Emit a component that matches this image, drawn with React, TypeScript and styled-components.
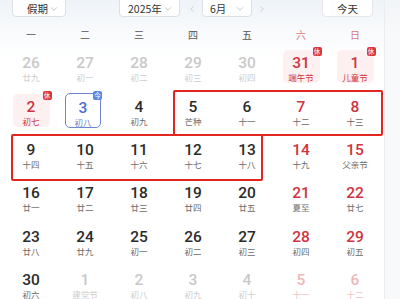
import React from 'react'
import styled, { createGlobalStyle, css } from 'styled-components'
import { ChevronDown, ChevronLeft, ChevronRight } from 'lucide-react'

const GlobalStyle = createGlobalStyle`
  html, body {
    margin: 0;
    padding: 0;
    background: #f7f8f9;
    font-family: Roboto, "Noto Sans CJK SC", sans-serif;
  }
`

type Kind = 'normal' | 'weekend' | 'faded' | 'fadedWeekend'

interface Day {
  n: number
  lunar: string
  kind?: Kind
  rest?: boolean
  today?: boolean
  festival?: boolean
}

const ROWS: Day[][] = [
  [
    { n: 26, lunar: '廿九', kind: 'faded' },
    { n: 27, lunar: '初一', kind: 'faded' },
    { n: 28, lunar: '初二', kind: 'faded' },
    { n: 29, lunar: '初三', kind: 'faded' },
    { n: 30, lunar: '初四', kind: 'faded' },
    { n: 31, lunar: '端午节', kind: 'weekend', rest: true, festival: true },
    { n: 1, lunar: '儿童节', kind: 'weekend', rest: true, festival: true },
  ],
  [
    { n: 2, lunar: '初七', kind: 'weekend', rest: true, festival: true },
    { n: 3, lunar: '初八', today: true },
    { n: 4, lunar: '初九' },
    { n: 5, lunar: '芒种' },
    { n: 6, lunar: '十一' },
    { n: 7, lunar: '十二', kind: 'weekend' },
    { n: 8, lunar: '十三', kind: 'weekend' },
  ],
  [
    { n: 9, lunar: '十四' },
    { n: 10, lunar: '十五' },
    { n: 11, lunar: '十六' },
    { n: 12, lunar: '十七' },
    { n: 13, lunar: '十八' },
    { n: 14, lunar: '十九', kind: 'weekend' },
    { n: 15, lunar: '父亲节', kind: 'weekend' },
  ],
  [
    { n: 16, lunar: '廿一' },
    { n: 17, lunar: '廿二' },
    { n: 18, lunar: '廿三' },
    { n: 19, lunar: '廿四' },
    { n: 20, lunar: '廿五' },
    { n: 21, lunar: '夏至', kind: 'weekend' },
    { n: 22, lunar: '廿七', kind: 'weekend' },
  ],
  [
    { n: 23, lunar: '廿八' },
    { n: 24, lunar: '廿九' },
    { n: 25, lunar: '初一' },
    { n: 26, lunar: '初二' },
    { n: 27, lunar: '初三' },
    { n: 28, lunar: '初四', kind: 'weekend' },
    { n: 29, lunar: '初五', kind: 'weekend' },
  ],
  [
    { n: 30, lunar: '初六' },
    { n: 1, lunar: '建党节', kind: 'faded' },
    { n: 2, lunar: '初八', kind: 'faded' },
    { n: 3, lunar: '初九', kind: 'faded' },
    { n: 4, lunar: '初十', kind: 'faded' },
    { n: 5, lunar: '十一', kind: 'fadedWeekend' },
    { n: 6, lunar: '十二', kind: 'fadedWeekend' },
  ],
]

const WEEK = ['一', '二', '三', '四', '五', '六', '日']

const numColor: Record<Kind, string> = {
  normal: '#2b2b2b',
  weekend: '#cf3440',
  faded: '#c9c9c9',
  fadedWeekend: '#f0b6ba',
}

const lunarColor: Record<Kind, string> = {
  normal: '#6a6a6a',
  weekend: '#6a6a6a',
  faded: '#cdcdcd',
  fadedWeekend: '#efc2c5',
}

const Page = styled.div`
  display: flex;
  width: 400px;
  height: 299px;
  overflow: hidden;
`

const Panel = styled.div`
  width: 384px;
  flex: none;
  background: linear-gradient(#eef3f8 0, #f8fafc 30px, #ffffff 60px);
  border-right: 1px solid #ececec;
`

const Toolbar = styled.div`
  display: flex;
  align-items: center;
  height: 23px;
  margin-top: -6px;
  padding: 0 11px 0 12px;
`

const Select = styled.div<{ $w: number; $ml?: number; $pl?: number }>`
  display: flex;
  align-items: center;
  justify-content: space-between;
  box-sizing: border-box;
  flex: none;
  width: ${(p) => p.$w}px;
  height: 22px;
  margin-left: ${(p) => p.$ml ?? 0}px;
  padding: 6px 6px 0 ${(p) => p.$pl ?? 7}px;
  background: #fff;
  border: 1px solid #dcdfe3;
  border-radius: 4px;
  font-size: 10.5px;
  white-space: nowrap;
  color: #333;
  font-family: "Noto Sans CJK SC", sans-serif;

  svg {
    flex: none;
  }
`

const Arrow = styled.div<{ $ml: number }>`
  display: flex;
  align-items: center;
  padding-top: 6px;
  margin-left: ${(p) => p.$ml}px;
  color: #b5b8bd;
`

const TodayButton = styled.div`
  display: flex;
  align-items: center;
  justify-content: center;
  box-sizing: border-box;
  width: 51px;
  height: 23px;
  margin-left: auto;
  padding-top: 6px;
  background: #fff;
  border: 1px solid #e4e6e9;
  border-radius: 4px;
  font-size: 10.5px;
  color: #333;
  font-family: "Noto Sans CJK SC", sans-serif;
`

const WeekRow = styled.div`
  display: grid;
  grid-template-columns: repeat(7, 54px);
  height: 22px;
  padding: 6px 2px 0 4px;
`

const WeekDay = styled.div<{ $weekend: boolean }>`
  display: flex;
  align-items: center;
  justify-content: center;
  font-size: 10px;
  font-family: "Noto Sans CJK SC", sans-serif;
  color: ${(p) => (p.$weekend ? '#d77a80' : '#555')};
`

const Grid = styled.div`
  display: grid;
  grid-template-columns: repeat(7, 54px);
  grid-template-rows: repeat(6, 43.4px);
  padding: 0 2px 0 4px;
`

const Slot = styled.div<{ $row: number; $col: number }>`
  grid-row: ${(p) => p.$row};
  grid-column: ${(p) => p.$col};
  display: flex;
  align-items: center;
  justify-content: center;
`

const Cell = styled.div<{ $rest?: boolean; $today?: boolean; $shift?: number }>`
  position: relative;
  box-sizing: border-box;
  width: 37px;
  height: 33px;
  padding-top: 4px;
  margin-left: ${(p) => p.$shift ?? 0}px;
  display: flex;
  flex-direction: column;
  align-items: center;
  border-radius: 5px;
  ${(p) =>
    p.$rest &&
    css`
      background: #fdf0f0;
    `}
  ${(p) =>
    p.$today &&
    css`
      width: 36px;
      height: 35px;
      padding-top: 5px;
      border: 1px solid #6f86d3;
      background: #fff;
    `}
`

const Num = styled.div<{ $color: string }>`
  font-family: Roboto, sans-serif;
  font-size: 15.5px;
  font-weight: 500;
  line-height: 18px;
  color: ${(p) => p.$color};
`

const Lunar = styled.div<{ $color: string }>`
  font-family: "Noto Sans CJK SC", sans-serif;
  font-size: 8.5px;
  line-height: 11px;
  white-space: nowrap;
  color: ${(p) => p.$color};
`

const Badge = styled.div<{ $blue?: boolean }>`
  position: absolute;
  top: -3px;
  right: -2px;
  width: 9px;
  height: 9px;
  border-radius: 2px;
  display: flex;
  align-items: center;
  justify-content: center;
  font-family: "Noto Sans CJK SC", sans-serif;
  font-size: 6.5px;
  line-height: 9px;
  color: #fff;
  background: ${(p) => (p.$blue ? '#5c86e6' : '#d8353c')};
`

const Marker = styled.div<{ $row: number; $cols: string; $m: string }>`
  grid-row: ${(p) => p.$row};
  grid-column: ${(p) => p.$cols};
  margin: ${(p) => p.$m};
  border: 2px solid #e2251f;
  border-radius: 2px;
  pointer-events: none;
  z-index: 2;
`

const Side = styled.div`
  flex: 1;
  background: linear-gradient(#f2f5f8 0, #f8f9fa 40px);
`

export default function App() {
  return (
    <>
      <GlobalStyle />
      <Page>
        <Panel>
          <Toolbar>
            <Select $w={54} $pl={14}>
              <span>假期</span>
              <ChevronDown size={10} strokeWidth={1.5} color="#9a9ea4" />
            </Select>
            <Select $w={61} $ml={53} $pl={8}>
              <span>2025年</span>
              <ChevronDown size={10} strokeWidth={1.5} color="#9a9ea4" />
            </Select>
            <Arrow $ml={7}>
              <ChevronLeft size={10} strokeWidth={1.5} />
            </Arrow>
            <Select $w={50} $ml={5}>
              <span>6月</span>
              <ChevronDown size={10} strokeWidth={1.5} color="#9a9ea4" />
            </Select>
            <Arrow $ml={5}>
              <ChevronRight size={10} strokeWidth={1.5} />
            </Arrow>
            <TodayButton>今天</TodayButton>
          </Toolbar>
          <WeekRow>
            {WEEK.map((w, i) => (
              <WeekDay key={w} $weekend={i >= 5}>
                {w}
              </WeekDay>
            ))}
          </WeekRow>
          <Grid>
            {ROWS.map((row, r) =>
              row.map((d, c) => {
                const kind = d.kind ?? 'normal'
                const nc = d.today ? '#4f6fd0' : numColor[kind]
                const lc = d.today
                  ? '#6f82c4'
                  : d.festival
                  ? '#cf3440'
                  : lunarColor[kind]
                return (
                  <Slot key={`${r}-${c}`} $row={r + 1} $col={c + 1}>
                    <Cell $rest={d.rest} $today={d.today} $shift={d.today ? -4 : 0}>
                      <Num $color={nc}>{d.n}</Num>
                      <Lunar $color={lc}>{d.lunar}</Lunar>
                      {d.rest && <Badge>休</Badge>}
                      {d.today && <Badge $blue>今</Badge>}
                    </Cell>
                  </Slot>
                )
              })
            )}
            <Marker $row={2} $cols="4 / 8" $m="2px -1px -4px 7px" />
            <Marker $row={3} $cols="1 / 6" $m="2px 11px -6px 7px" />
          </Grid>
        </Panel>
        <Side />
      </Page>
    </>
  )
}
